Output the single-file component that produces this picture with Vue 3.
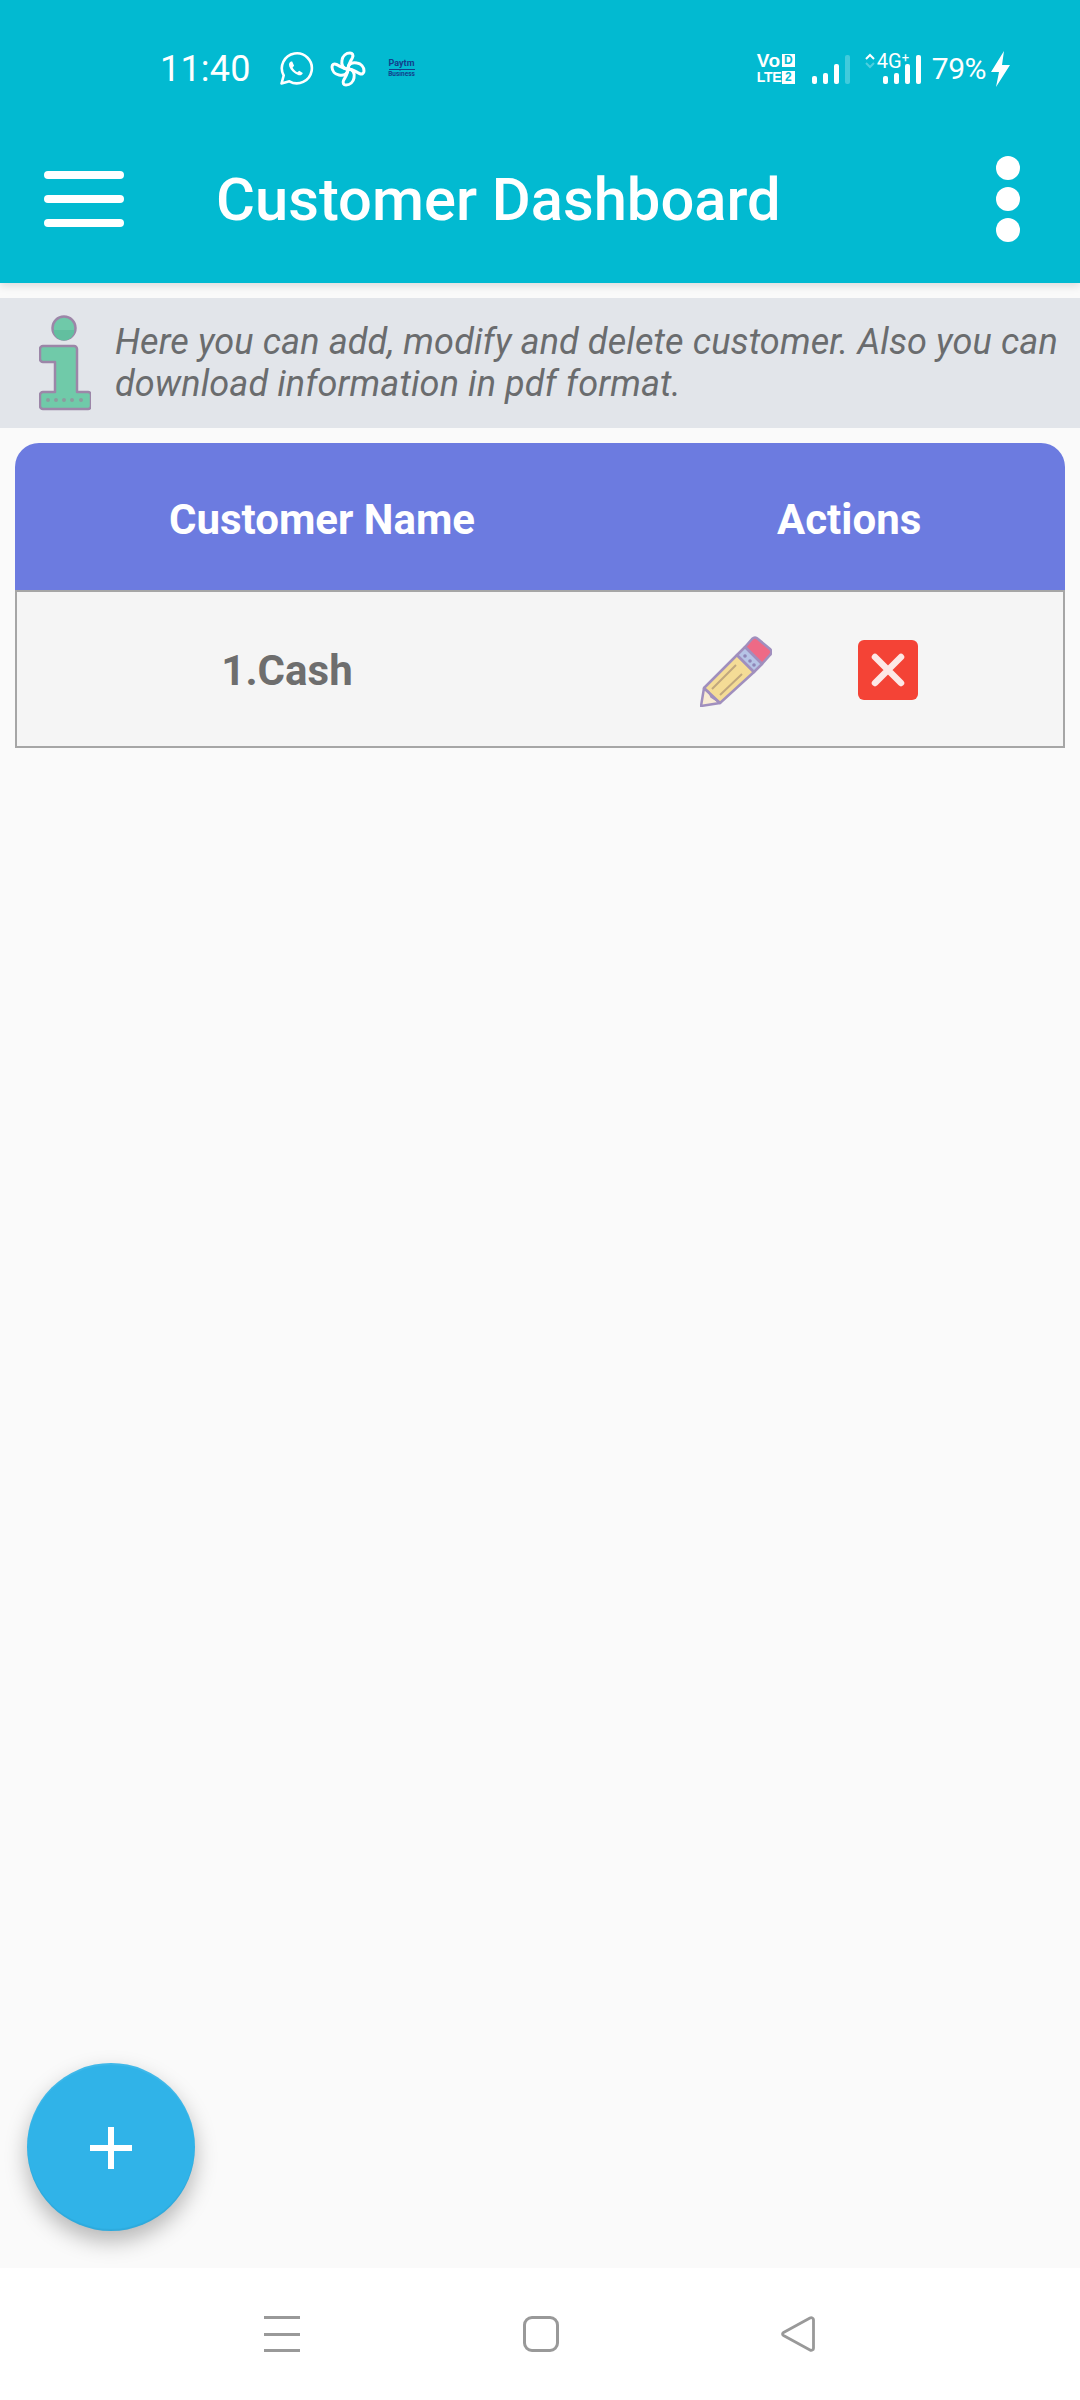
<template>
  <div class="phone">
    <header class="app-header">
      <div class="status-bar">
        <div class="status-left">
          <span class="clock">11:40</span>
          <svg class="ic-whatsapp" viewBox="0 0 36 36" width="36" height="36">
            <path d="M3.500 32.500l2.200-8A15 15 0 1 1 11.400 30.300z" fill="none" stroke="#fff" stroke-width="2.600" stroke-linejoin="round" />
            <path d="M13 10.500c-1.600.6-2.500 2.600-1.700 5 1.400 3.800 4.600 7 8.800 8.600 2.200.7 4.200-.3 4.700-2.100l-3.600-2.200-1.800 1.500c-2-.9-3.800-2.700-4.800-4.800l1.500-1.800-1.900-4.200z" fill="#fff" />
          </svg>
          <svg class="ic-fan" viewBox="0 0 36 36" width="36" height="36">
            <g fill="none" stroke="#fff" stroke-width="3" stroke-linejoin="round">
              <path d="M18 18C13 18 11 14 12 9c.7-4 4-7 8-7 2.500 0 3.500 2 2.500 4.500C21 10 18 13 18 18z" />
              <path d="M18 18c0-5 4-7 9-6 4 .7 7 4 7 8 0 2.500-2 3.500-4.500 2.500C26 21 23 18 18 18z" />
              <path d="M18 18c5 0 7 4 6 9-.7 4-4 7-8 7-2.500 0-3.500-2-2.500-4.500C15 26 18 23 18 18z" />
              <path d="M18 18c0 5-4 7-9 6-4-.7-7-4-7-8 0-2.500 2-3.500 4.500-2.500C10 15 13 18 18 18z" />
            </g>
          </svg>
          <div class="paytm">
            <span class="paytm-name">Paytm</span>
            <span class="paytm-rule"></span>
            <span class="paytm-biz">Business</span>
          </div>
        </div>
        <div class="status-right">
          <div class="volte">
            <div class="volte-row"><span class="volte-vo">Vo</span><span class="volte-box">D</span></div>
            <div class="volte-row"><span class="volte-lte">LTE</span><span class="volte-box">2</span></div>
          </div>
          <div class="bars sim1">
            <i class="b1"></i><i class="b2"></i><i class="b3"></i><i class="b4 dim"></i>
          </div>
          <div class="net">
            <svg class="arrows" viewBox="0 0 10 16" width="10" height="16">
              <path d="M1 6l4-4 4 4" fill="none" stroke="#fff" stroke-width="2" />
              <path d="M1 10l4 4 4-4" fill="none" stroke="#fff" stroke-opacity=".3" stroke-width="2" />
            </svg>
            <span class="net-label">4G<sup>+</sup></span>
            <div class="bars sim2">
              <i class="b1"></i><i class="b2"></i><i class="b3"></i><i class="b4"></i>
            </div>
          </div>
          <span class="battery">79%</span>
          <svg class="bolt" viewBox="0 0 20 36" width="20" height="36">
            <path d="M13 0L0 21h8L5 36 19 14h-8z" fill="#fff" />
          </svg>
        </div>
      </div>
      <div class="toolbar">
        <div class="burger"><span></span><span></span><span></span></div>
        <h1 class="title">Customer Dashboard</h1>
        <div class="dots"><span></span><span></span><span></span></div>
      </div>
    </header>

    <main class="content">
      <section class="info">
        <svg class="info-icon" viewBox="0 0 52 96" width="52" height="96">
          <circle cx="25" cy="13" r="11.500" fill="#6fc9a9" stroke="#9c86a8" stroke-width="2.500" />
          <path d="M14.500 15h21a10.500 10.500 0 0 1-21 0z" fill="#62bf9f" />
          <path d="M4 31h31a3 3 0 0 1 3 3v43h11a3 3 0 0 1 3 3v11a3 3 0 0 1-3 3H4a3 3 0 0 1-3-3V80a3 3 0 0 1 3-3h12V47H4a3 3 0 0 1-3-3V34a3 3 0 0 1 3-3z" fill="#70caa9" stroke="#9c86a8" stroke-width="2.500" stroke-linejoin="round" />
          <g fill="#8c9c9f">
            <circle cx="9" cy="85" r="2" /><circle cx="17" cy="85" r="2" /><circle cx="25" cy="85" r="2" /><circle cx="33" cy="85" r="2" /><circle cx="42" cy="85" r="2" />
          </g>
        </svg>
        <p class="info-text">Here you can add, modify and delete customer. Also you can download information in pdf format.</p>
      </section>

      <section class="table">
        <div class="table-head">
          <span class="th-name">Customer Name</span>
          <span class="th-actions">Actions</span>
        </div>
        <div v-for="(c, i) in customers" :key="c" class="table-row">
          <span class="td-name">{{ i + 1 }}.{{ c }}</span>
          <div class="td-actions">
            <svg class="pencil" viewBox="0 0 72 72" width="72" height="72">
              <g stroke="#a08fbe" stroke-width="2.500" stroke-linejoin="round">
                <path d="M1 71l3-18 16 15z" fill="#f8ebd3" />
                <path d="M4 53L37 20l17 17-34 31z" fill="#f4dc96" />
                <path d="M45 12l7-8c2-2 4-2 6 0l12 10c2 2 2 4 0 6l-8 9z" fill="#ee6a86" />
                <path d="M37 20l8-8 17 17-8 8z" fill="#b6c4e6" />
              </g>
              <g fill="#8f86b8">
                <circle cx="45" cy="21" r="1.800" /><circle cx="50" cy="26" r="1.800" /><circle cx="54" cy="30" r="1.800" />
              </g>
              <path d="M12 54l24-24M20 60l22-21" stroke="#c0a77e" stroke-width="2" fill="none" />
              <path d="M4 53l5 4 2 5 9 6" stroke="#a08fbe" stroke-width="1.500" fill="none" />
            </svg>
            <div class="del">
              <svg viewBox="0 0 60 60" width="60" height="60">
                <path d="M17 17l26 26M43 17L17 43" stroke="#fde8e6" stroke-width="6.500" stroke-linecap="round" />
              </svg>
            </div>
          </div>
        </div>
      </section>
    </main>

    <button class="fab" type="button">
      <span class="plus"></span>
    </button>

    <nav class="navbar">
      <div class="nav-menu"><span></span><span></span><span></span></div>
      <div class="nav-home"></div>
      <svg class="nav-back" viewBox="0 0 34 36" width="34" height="36">
        <path d="M2.500 16.500L29 2c1.500-.8 3.500 0 3.500 1.800v28.400c0 1.800-2 2.600-3.500 1.800L2.500 19.500c-1.300-.8-1.300-2.200 0-3z" fill="none" stroke="#999" stroke-width="2.800" stroke-linejoin="round" />
      </svg>
    </nav>
  </div>
</template>

<script setup>
const customers = ['Cash']
</script>

<style>
body {
  margin: 0;
  background: #fafafa;
}
</style>

<style scoped>
.phone {
  position: relative;
  width: 1080px;
  height: 2400px;
  display: flex;
  flex-direction: column;
  background: #fafafa;
  font-family: Roboto, "Liberation Sans", sans-serif;
  overflow: hidden;
}

/* header */
.app-header {
  height: 283px;
  flex: none;
  background: #02bad1;
  color: #fff;
  box-shadow: 0 3px 8px rgba(0, 0, 0, 0.12);
}

.status-bar {
  height: 100px;
  padding: 37px 69px 0 160px;
  box-sizing: border-box;
  display: flex;
  justify-content: space-between;
  align-items: center;
}

.status-left,
.status-right {
  display: flex;
  align-items: center;
}

.clock {
  font-size: 36px;
  letter-spacing: 0.2px;
  width: 118px;
}

.ic-fan {
  margin-left: 16px;
}

.paytm {
  margin-left: 22px;
  width: 27px;
  display: flex;
  flex-direction: column;
  align-items: center;
  color: #123f8c;
  font-weight: 700;
  line-height: 1;
}

.paytm-name {
  font-size: 9px;
}

.paytm-rule {
  width: 26px;
  height: 1px;
  background: #123f8c;
  margin: 1px 0;
}

.paytm-biz {
  font-size: 6.500px;
}

.volte {
  width: 38px;
  display: flex;
  flex-direction: column;
  gap: 4px;
  font-family: "Liberation Sans", sans-serif;
  font-weight: 700;
}

.volte-row {
  display: flex;
  justify-content: space-between;
  align-items: center;
  height: 13px;
  line-height: 13px;
}

.volte-vo {
  font-size: 19px;
  letter-spacing: 0.5px;
}

.volte-lte {
  font-size: 14px;
  letter-spacing: -0.3px;
}

.volte-box {
  background: #fff;
  color: #02bad1;
  width: 13px;
  height: 13px;
  font-size: 12px;
  line-height: 13px;
  text-align: center;
}

.bars {
  display: flex;
  align-items: flex-end;
  gap: 6px;
  height: 30px;
}

.bars i {
  display: block;
  width: 5px;
  border-radius: 2px;
  background: #fff;
}

.bars .b1 { height: 8px; }
.bars .b2 { height: 11px; }
.bars .b3 { height: 20px; }
.bars .b4 { height: 29px; }
.bars .dim { opacity: 0.25; }

.sim1 {
  margin-left: 17px;
}

.net {
  position: relative;
  margin-left: 15px;
  width: 56px;
  height: 32px;
}

.net .sim2 {
  position: absolute;
  right: 0;
  bottom: 1px;
}

.arrows {
  position: absolute;
  left: 0;
  top: 0;
}

.net-label {
  position: absolute;
  left: 12px;
  top: -2px;
  font-size: 20px;
  line-height: 20px;
}

.net-label sup {
  font-size: 13px;
  line-height: 0;
  vertical-align: 6px;
}

.battery {
  margin-left: 11px;
  font-size: 30px;
  letter-spacing: -0.5px;
}

.bolt {
  margin-left: 5px;
}

.toolbar {
  height: 183px;
  display: flex;
  align-items: center;
  padding: 15px 60px 0 44px;
  box-sizing: border-box;
}

.burger {
  width: 80px;
  display: flex;
  flex-direction: column;
  gap: 16px;
}

.burger span {
  height: 8px;
  border-radius: 4px;
  background: #fff;
}

.title {
  margin: 3px 0 0 92px;
  flex: 1;
  font-size: 59.700px;
  font-weight: 500;
  line-height: 1;
}

.dots {
  display: flex;
  flex-direction: column;
  gap: 7px;
}

.dots span {
  width: 24px;
  height: 24px;
  border-radius: 50%;
  background: #fff;
}

/* content */
.content {
  flex: 1;
  padding-top: 15px;
}

.info {
  height: 130px;
  box-sizing: border-box;
  background: #e2e5ea;
  display: flex;
  align-items: center;
  padding-left: 39px;
}

.info-icon {
  flex: none;
}

.info-text {
  margin: 0 0 0 24px;
  font-size: 36px;
  font-style: italic;
  letter-spacing: 0.13px;
  line-height: 42px;
  color: #6a6c6e;
}

.table {
  margin: 15px 15px 0;
}

.table-head {
  height: 147px;
  padding-top: 5px;
  box-sizing: border-box;
  background: #6c7be0;
  border-radius: 24px 24px 0 0;
  display: flex;
  align-items: center;
  color: #fff;
  font-size: 42px;
  font-weight: 700;
}

.th-name {
  width: 614px;
  text-align: center;
}

.th-actions {
  padding-left: 148px;
}

.table-row {
  height: 158px;
  padding-top: 3px;
  box-sizing: border-box;
  background: #f5f5f5;
  border: 2px solid #a6a6a6;
  display: flex;
  align-items: center;
}

.td-name {
  width: 540px;
  text-align: center;
  font-size: 42px;
  font-weight: 700;
  color: #6e6e6e;
}

.td-actions {
  display: flex;
  align-items: center;
  gap: 86px;
  margin-left: 143px;
}

.del {
  width: 60px;
  height: 60px;
  border-radius: 6px;
  background: #f44336;
  margin-top: -2px;
}

.del svg,
.pencil {
  display: block;
}

/* floating button */
.fab {
  position: absolute;
  left: 27px;
  top: 2063px;
  width: 168px;
  height: 168px;
  padding: 0;
  border: 0;
  border-radius: 50%;
  background: #30b3e8;
  box-shadow: 0 10px 22px rgba(0, 0, 0, 0.28), inset 0 -2px 1px rgba(0, 0, 0, 0.05), inset 0 2px 1px rgba(255, 255, 255, 0.08);
}

.plus {
  position: absolute;
  left: 63px;
  top: 64px;
  width: 42px;
  height: 42px;
  background:
    linear-gradient(#fff, #fff) center / 42px 6px no-repeat,
    linear-gradient(#fff, #fff) center / 6px 42px no-repeat;
}

/* system navigation */
.navbar {
  height: 132px;
  flex: none;
  background: #fff;
  display: flex;
  align-items: flex-start;
  justify-content: space-between;
  padding: 48px 265px 0 264px;
  box-sizing: border-box;
}

.nav-menu {
  width: 36px;
  display: flex;
  flex-direction: column;
  gap: 13.500px;
}

.nav-menu span {
  height: 3px;
  background: #999;
}

.nav-home {
  width: 36px;
  height: 36px;
  box-sizing: border-box;
  border: 3px solid #999;
  border-radius: 9px;
}

.nav-back {
  display: block;
}
</style>
